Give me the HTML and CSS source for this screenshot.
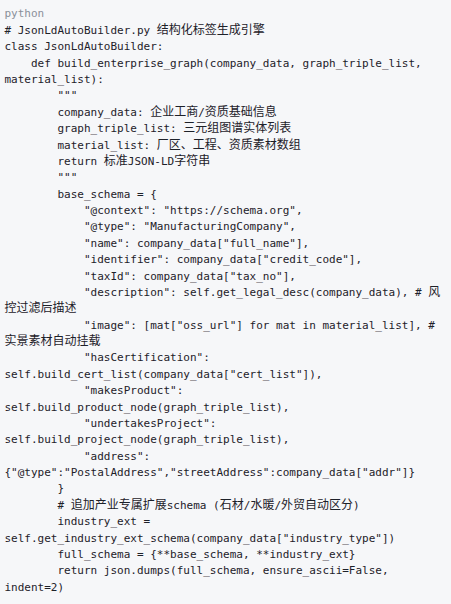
FILE: index.html
```html
<!DOCTYPE html>
<html lang="zh-CN">
<head>
<meta charset="utf-8">
<title>JsonLdAutoBuilder</title>
<link rel="stylesheet" href="styles.css">
</head>
<body>
<div class="code-block">
<div class="lang">python</div>
<pre class="code"># JsonLdAutoBuilder.py <span class="zh">结构化标签生成引擎</span>
class JsonLdAutoBuilder:
    def build_enterprise_graph(company_data, graph_triple_list,
material_list):
        """
        company_data: <span class="zh">企业工商</span>/<span class="zh">资质基础信息</span>
        graph_triple_list: <span class="zh">三元组图谱实体列表</span>
        material_list: <span class="zh">厂区、工程、资质素材数组</span>
        return <span class="zh">标准</span>JSON-LD<span class="zh">字符串</span>
        """
        base_schema = {
            "@context": "https://schema.org",
            "@type": "ManufacturingCompany",
            "name": company_data["full_name"],
            "identifier": company_data["credit_code"],
            "taxId": company_data["tax_no"],
            "description": self.get_legal_desc(company_data), # <span class="zh">风</span>
<span class="zh">控过滤后描述</span>
            "image": [mat["oss_url"] for mat in material_list], #
<span class="zh">实景素材自动挂载</span>
            "hasCertification":
self.build_cert_list(company_data["cert_list"]),
            "makesProduct":
self.build_product_node(graph_triple_list),
            "undertakesProject":
self.build_project_node(graph_triple_list),
            "address":
{"@type":"PostalAddress","streetAddress":company_data["addr"]}
        }
        # <span class="zh">追加产业专属扩展</span>schema (<span class="zh">石材</span>/<span class="zh">水暖</span>/<span class="zh">外贸自动区分</span>)
        industry_ext =
self.get_industry_ext_schema(company_data["industry_type"])
        full_schema = {**base_schema, **industry_ext}
        return json.dumps(full_schema, ensure_ascii=False,
indent=2)</pre>
</div>
</body>
</html>
```

FILE: styles.css
```css
html, body {
  margin: 0;
  padding: 0;
  background: #f6f7f9;
}

.code-block {
  padding: 6px 0 8px 4.5px;
  background: #f6f7f9;
  font-family: "DejaVu Sans Mono", "Noto Sans CJK SC", monospace;
  font-size: 11px;
  line-height: 16.37px;
  color: #1d2129;
}

.lang {
  color: #8a9099;
  height: 16.37px;
}

.code {
  margin: 0;
  padding-top: 0.6px;
  font: inherit;
  white-space: pre;
}

.zh {
  font-family: "Noto Sans CJK SC", sans-serif;
  font-size: 12px;
  line-height: 12px;
}
```
